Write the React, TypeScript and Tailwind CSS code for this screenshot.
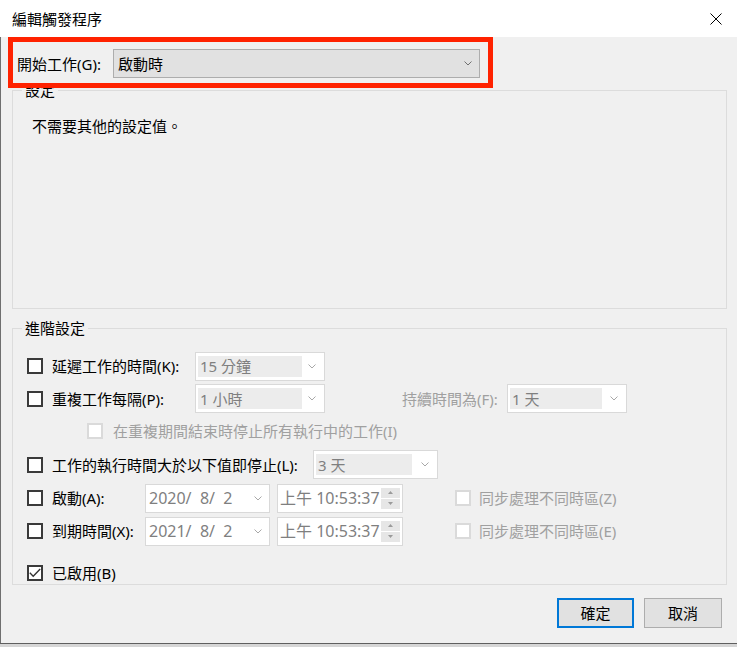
import React from "react";

const Chevron = ({ color = "#8a8a8a" }: { color?: string }) => (
  <svg width="8" height="5" viewBox="0 0 8 5" className="shrink-0">
    <path d="M0.5 0.5 L4 4 L7.5 0.5" fill="none" stroke={color} strokeWidth="1" />
  </svg>
);

const Check = ({ checked = false, disabled = false }: { checked?: boolean; disabled?: boolean }) => (
  <span
    className={
      "w-[16px] h-[16px] shrink-0 bg-white flex items-center justify-center " +
      (disabled ? "border-[2px] border-[#dadada]" : "border-[2px] border-[#3a3a3a]")
    }
  >
    {checked && (
      <svg width="12" height="12" viewBox="0 0 12 12">
        <path d="M0.8 5.8 L4.2 9.2 L11.2 2" fill="none" stroke="#333333" strokeWidth="1.4" />
      </svg>
    )}
  </span>
);

const Combo = ({ w, fill, text }: { w: string; fill: string; text: string }) => (
  <div className={`${w} h-[29px] shrink-0 bg-white border border-[#d9d9d9] flex items-center pl-[2px] pr-[8px]`}>
    <div className={`${fill} h-[21px] bg-[#ececec] flex items-center pl-[2px] text-[#7f7f7f] whitespace-pre`}>{text}</div>
    <div className="flex-1" />
    <Chevron color="#a8a8a8" />
  </div>
);

const DateBox = ({ text }: { text: string }) => (
  <div className="w-[125px] h-[29px] shrink-0 bg-white border border-[#d9d9d9] flex items-center pl-[3px] pr-[7px] text-[#7f7f7f] text-[16px]">
    <span className="whitespace-pre">{text}</span>
    <div className="flex-1" />
    <Chevron color="#a8a8a8" />
  </div>
);

const TimeBox = () => (
  <div className="w-[126px] h-[29px] shrink-0 bg-white border border-[#d9d9d9] flex items-center pl-[2px] pr-[2px] text-[#7f7f7f] text-[16px]">
    <span className="whitespace-pre">上午 10:53:37</span>
    <div className="flex-1" />
    <div className="flex flex-col gap-[1px]">
      <div className="w-[19px] h-[10px] bg-[#e6e6e6] flex items-center justify-center">
        <svg width="5" height="3" viewBox="0 0 5 3"><path d="M0 3 L2.5 0 L5 3 Z" fill="#9a9a9a" /></svg>
      </div>
      <div className="w-[19px] h-[10px] bg-[#e6e6e6] flex items-center justify-center">
        <svg width="5" height="3" viewBox="0 0 5 3"><path d="M0 0 L2.5 3 L5 0 Z" fill="#9a9a9a" /></svg>
      </div>
    </div>
  </div>
);

export default function App() {
  return (
    <div
      lang="zh-Hant-TW"
      className="w-[737px] h-[647px] relative overflow-hidden bg-[#f0f0f0] flex flex-col text-[15px] leading-[20px] text-black font-['Noto_Sans','Noto_Sans_CJK_TC',sans-serif]"
    >
      {/* title bar */}
      <div className="h-[37px] shrink-0 bg-white flex items-center justify-between pl-[12px] pr-[15px]">
        <span>編輯觸發程序</span>
        <svg width="12" height="12" viewBox="0 0 12 12">
          <path d="M0.5 0.5 L11.5 11.5 M11.5 0.5 L0.5 11.5" stroke="#000" strokeWidth="1" />
        </svg>
      </div>

      {/* body */}
      <div className="h-[606px] shrink-0 border-l border-[#6f6f6f] flex flex-col">
        {/* start row */}
        <div className="h-[53px] shrink-0 flex items-center pl-[16px]">
          <span className="w-[96px] shrink-0">開始工作(G):</span>
          <div className="w-[367px] h-[29px] bg-[#e1e1e1] border border-[#adadad] flex items-center pl-[4px] pr-[7px]">
            <span>啟動時</span>
            <div className="flex-1" />
            <Chevron color="#707070" />
          </div>
        </div>

        {/* settings group */}
        <div className="ml-[11px] w-[715px] h-[219px] shrink-0 border border-[#dcdcdc] flex flex-col">
          <div className="-mt-[11px] ml-[9px] px-[3px] w-fit bg-[#f0f0f0]">設定</div>
          <div className="mt-[16px] pl-[19px] font-['Noto_Sans_CJK_TC',sans-serif]">不需要其他的設定值。</div>
        </div>

        {/* advanced group */}
        <div className="mt-[19px] ml-[11px] w-[715px] h-[257px] shrink-0 border border-[#dcdcdc] flex flex-col">
          <div className="-mt-[11px] ml-[9px] px-[3px] w-fit bg-[#f0f0f0]">進階設定</div>

          <div className="mt-[12px] h-[32px] flex items-center pl-[14px]">
            <Check />
            <span className="ml-[9px] w-[143px] shrink-0">延遲工作的時間(K):</span>
            <Combo w="w-[130px]" fill="w-[104px]" text="15 分鐘" />
          </div>

          <div className="h-[33px] flex items-center pl-[14px]">
            <Check />
            <span className="ml-[9px] w-[143px] shrink-0">重複工作每隔(P):</span>
            <Combo w="w-[130px]" fill="w-[104px]" text="1 小時" />
            <span className="ml-[77px] w-[105px] shrink-0 text-[#a0a0a0]">持續時間為(F):</span>
            <Combo w="w-[120px]" fill="w-[92px]" text="1 天" />
          </div>

          <div className="h-[32px] flex items-center pl-[74px]">
            <Check disabled />
            <span className="ml-[10px] text-[#a0a0a0]">在重複期間結束時停止所有執行中的工作(I)</span>
          </div>

          <div className="h-[35px] flex items-center pl-[14px]">
            <Check />
            <span className="ml-[9px] w-[261px] shrink-0">工作的執行時間大於以下值即停止(L):</span>
            <Combo w="w-[125px]" fill="w-[96px]" text="3 天" />
          </div>

          <div className="h-[32px] flex items-center pl-[14px]">
            <Check />
            <span className="ml-[9px] w-[93px] shrink-0">啟動(A):</span>
            <DateBox text="2020/  8/  2" />
            <div className="ml-[7px]"><TimeBox /></div>
            <div className="ml-[52px]"><Check disabled /></div>
            <span className="ml-[8px] text-[#a0a0a0]">同步處理不同時區(Z)</span>
          </div>

          <div className="h-[34px] flex items-center pl-[14px]">
            <Check />
            <span className="ml-[9px] w-[93px] shrink-0">到期時間(X):</span>
            <DateBox text="2021/  8/  2" />
            <div className="ml-[7px]"><TimeBox /></div>
            <div className="ml-[52px]"><Check disabled /></div>
            <span className="ml-[8px] text-[#a0a0a0]">同步處理不同時區(E)</span>
          </div>

          <div className="mt-[15px] h-[20px] flex items-center pl-[14px]">
            <Check checked />
            <span className="ml-[9px]">已啟用(B)</span>
          </div>
        </div>

        {/* buttons */}
        <div className="mt-[13px] flex justify-end gap-[10px] pr-[15px]">
          <button className="w-[77px] h-[30px] bg-[#e1e1e1] border-2 border-[#0078d7] flex items-center justify-center">確定</button>
          <button className="w-[78px] h-[30px] bg-[#e1e1e1] border border-[#adadad] flex items-center justify-center">取消</button>
        </div>
      </div>

      <div className="h-[1px] shrink-0 bg-[#5f5f5f]" />
      <div className="flex-1 bg-[#d6d6d6]" />

      {/* red annotation box */}
      <div className="absolute left-[8px] top-[37px] w-[485px] h-[51px] border-[5px] border-[#ff2200] pointer-events-none z-10" />
    </div>
  );
}
